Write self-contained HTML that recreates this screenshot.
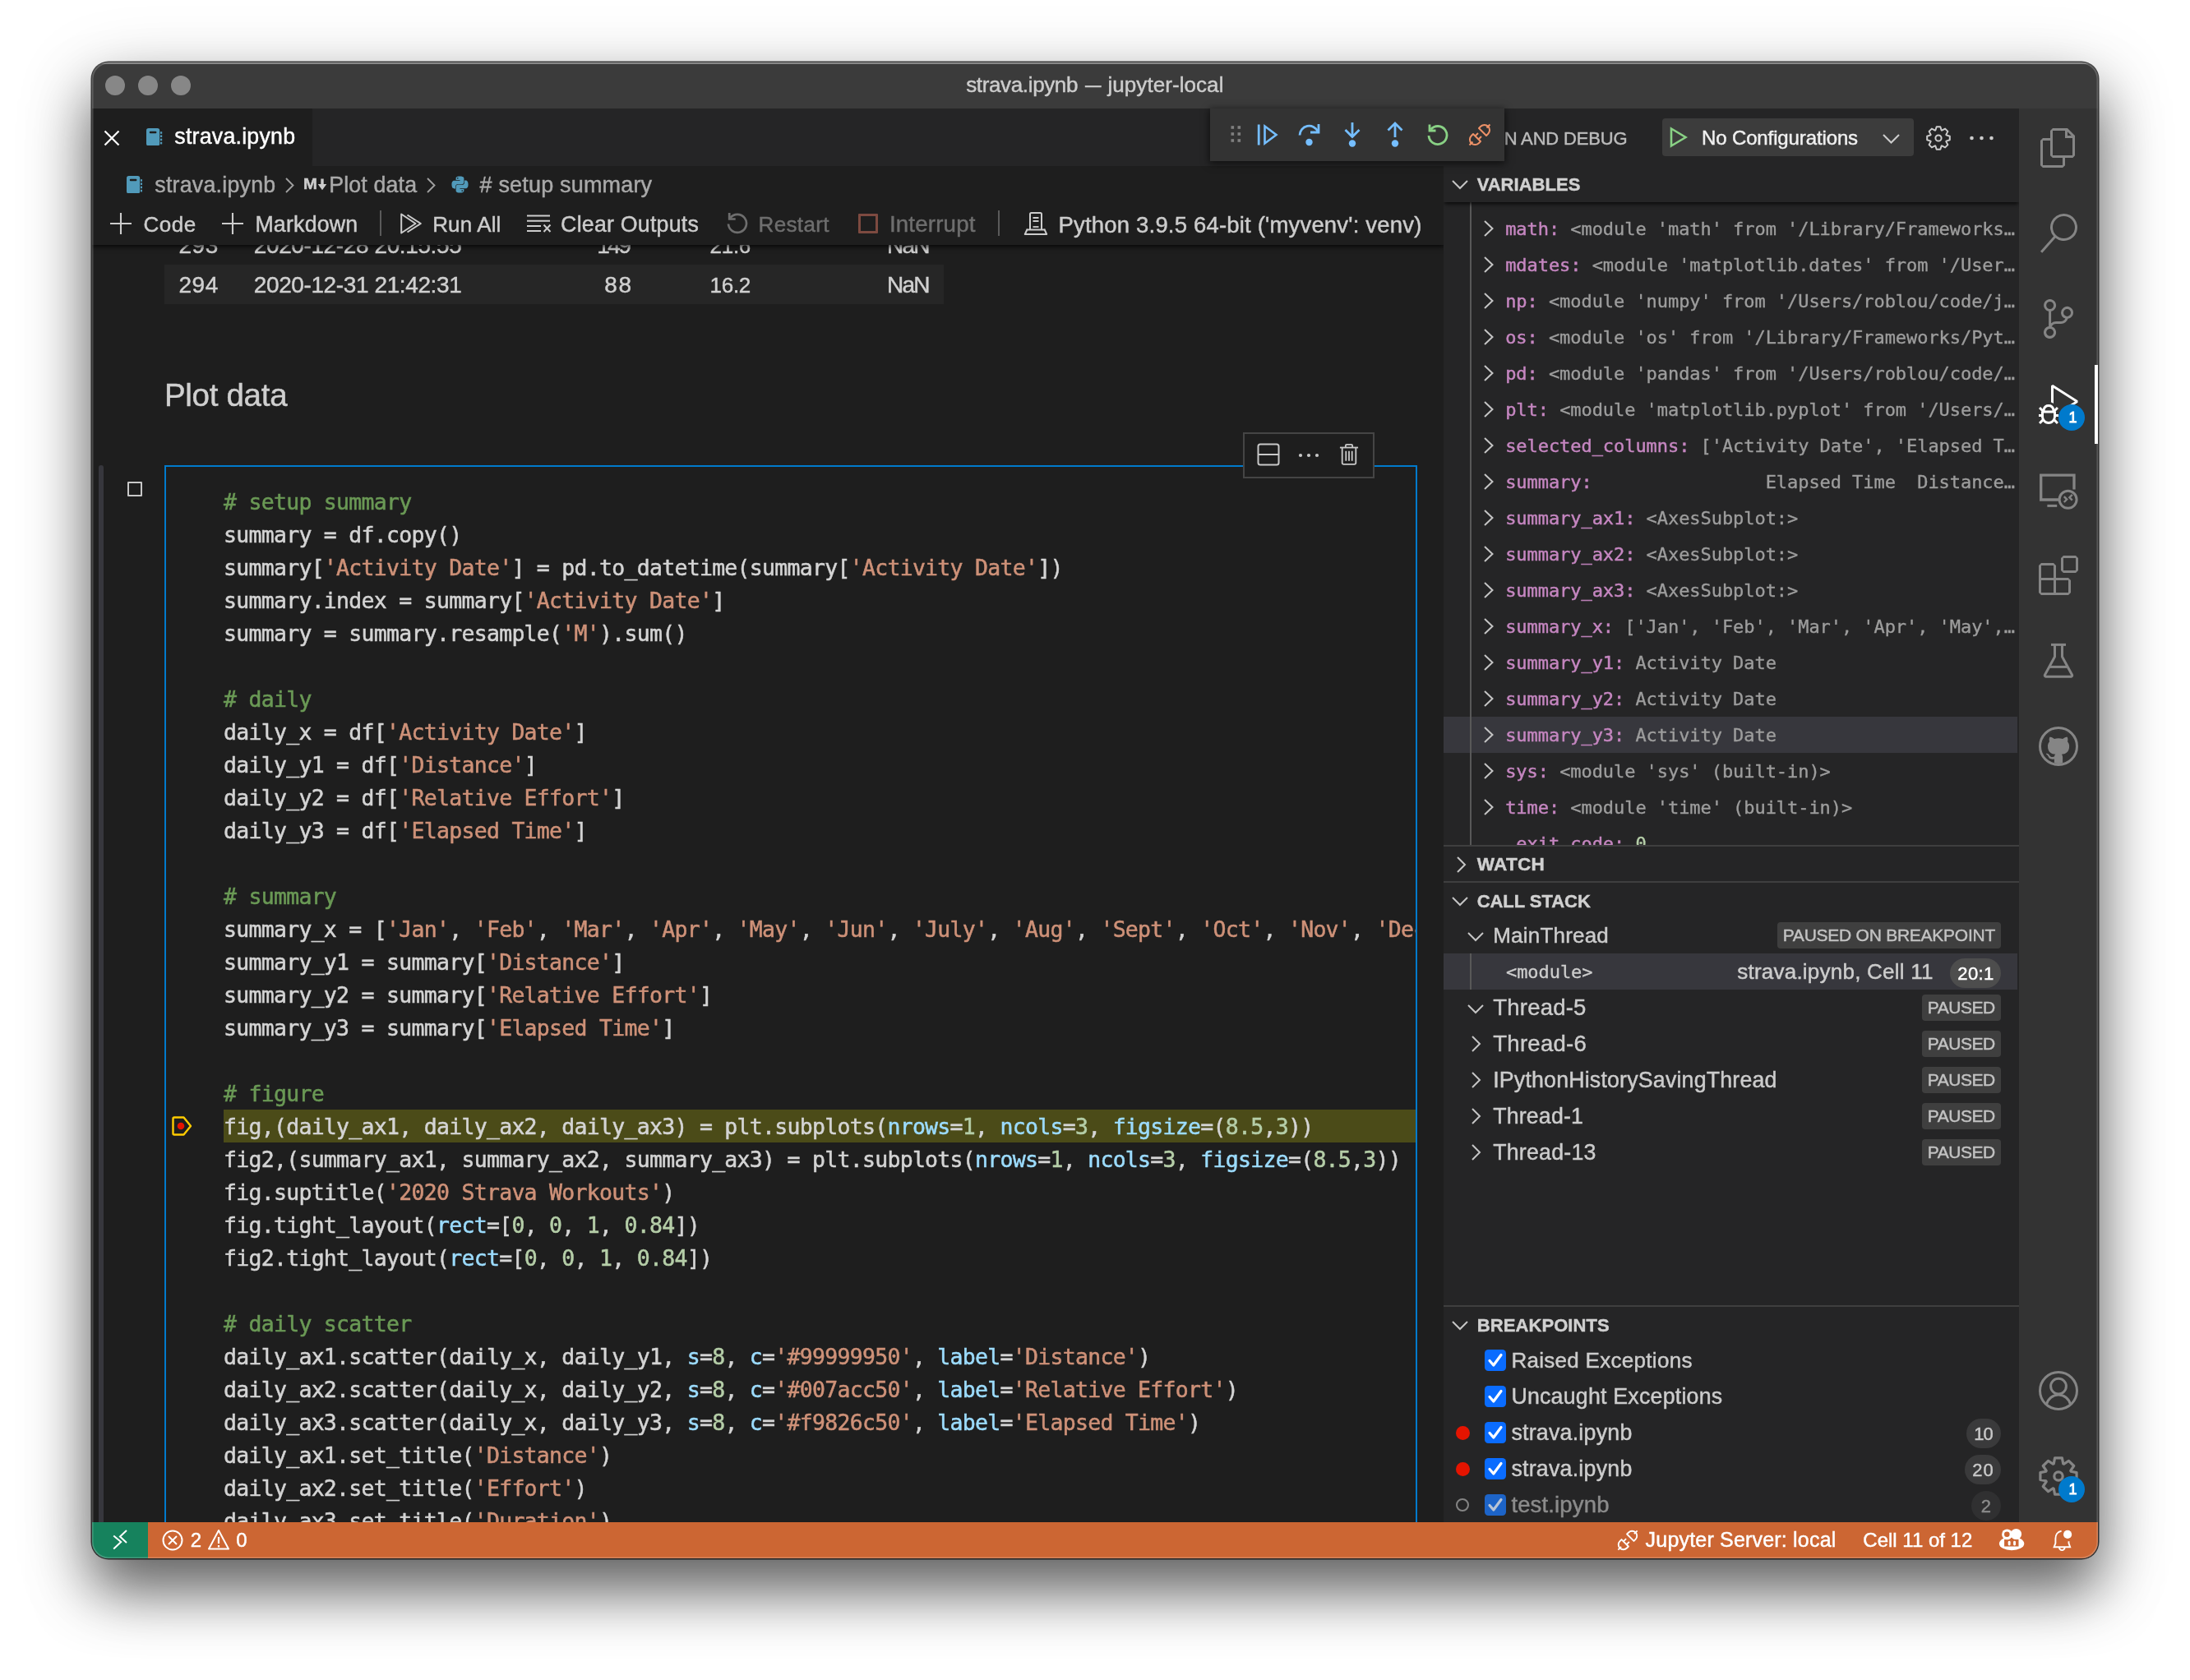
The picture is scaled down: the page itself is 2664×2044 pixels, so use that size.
<!DOCTYPE html>
<html lang="en"><head><meta charset="utf-8"><title>strava.ipynb — jupyter-local</title>
<style>
html,body{margin:0;padding:0;background:#fff;}
body{width:2664px;height:2044px;position:relative;overflow:hidden;font-family:"Liberation Sans",sans-serif;}
#win{position:absolute;left:112px;top:76px;width:2440px;height:1820px;border-radius:20px;overflow:hidden;background:#1e1e1e;}
#shadow{position:absolute;left:112px;top:76px;width:2440px;height:1820px;border-radius:20px;box-shadow:0 0 0 1.5px rgba(0,0,0,.72),0 40px 68px rgba(0,0,0,.5),0 25px 90px rgba(0,0,0,.25);}
#edge{position:absolute;left:112px;top:76px;width:2440px;height:1820px;border-radius:20px;box-shadow:inset 0 0 0 1.5px rgba(255,255,255,.2);pointer-events:none;}
#in{position:absolute;left:-112px;top:-76px;width:2664px;height:2044px;will-change:transform;}
#in div,#in span,#in svg{position:absolute;}
#in span{white-space:pre;-webkit-text-stroke:0.45px;}
#in .clip{overflow:hidden;}
#in .clip>div,#in .clip>span,#in .clip>svg{position:absolute;}
.code{font-family:'DejaVu Sans Mono','Liberation Mono',monospace;font-size:26.5px;letter-spacing:-0.72px;line-height:40px;color:#d4d4d4;white-space:pre;height:40px;-webkit-text-stroke:0.5px;}
.code i{font-style:normal;position:static!important;}
#in .code span{position:static;}
.c{color:#6a9955}.s{color:#ce9178}.n{color:#b5cea8}.k{color:#9cdcfe}
.v{font-family:'DejaVu Sans Mono','Liberation Mono',monospace;font-size:22px;letter-spacing:-0.06px;line-height:44px;height:44px;color:#9d9d9d;white-space:pre;-webkit-text-stroke:0.35px;}
#in .v span{position:static;color:#c586c0;}
</style></head><body>
<div id="shadow"></div>
<div id="win"><div id="in">
<div style="left:112px;top:76px;width:2440px;height:56px;background:#3b3b3b;"></div>
<div style="left:112px;top:76px;width:2440px;height:2px;background:rgba(255,255,255,.3);"></div>
<div style="left:128px;top:92px;width:24px;height:24px;background:#878787;border-radius:50%;"></div>
<div style="left:168px;top:92px;width:24px;height:24px;background:#878787;border-radius:50%;"></div>
<div style="left:208px;top:92px;width:24px;height:24px;background:#878787;border-radius:50%;"></div>
<span style="left:1175.21px;top:83.89px;font-size:26px;line-height:39px;color:#cccccc;letter-spacing:-0.36px;">strava.ipynb</span>
<span style="left:1319.51px;top:83.89px;font-size:26px;line-height:39px;color:#cccccc;transform:scaleX(0.75);transform-origin:0 50%;">—</span>
<span style="left:1347.41px;top:83.89px;font-size:26px;line-height:39px;color:#cccccc;letter-spacing:0.07px;">jupyter-local</span>
<div style="left:112px;top:132px;width:1644px;height:1720px;background:#1e1e1e;"></div>
<div style="left:1756px;top:132px;width:700px;height:1720px;background:#252526;"></div>
<div style="left:2456px;top:132px;width:96px;height:1720px;background:#333333;"></div>
<div style="left:112px;top:1852px;width:2440px;height:44px;background:#cc6633;"></div>
<div style="left:112px;top:1852px;width:68px;height:44px;background:#16825d;"></div>
<div class="clip" style="left:112px;top:298px;width:1644px;height:1554px;">
<div style="left:88px;top:24px;width:948px;height:48px;background:#262626;"></div>
<span style="left:105.48px;top:-19.76px;font-size:28px;line-height:42px;color:#d0d0d0;letter-spacing:0.56px;">293</span>
<span style="left:196.78px;top:-19.76px;font-size:28px;line-height:42px;color:#d0d0d0;letter-spacing:-0.39px;">2020-12-28 20:15:55</span>
<span style="left:614.18px;top:-19.76px;font-size:28px;line-height:42px;color:#d0d0d0;letter-spacing:-2.39px;">149</span>
<span style="left:751.61px;top:-17.57px;font-size:26px;line-height:39px;color:#d0d0d0;letter-spacing:-0.31px;">21.6</span>
<span style="left:967.08px;top:-19.76px;font-size:28px;line-height:42px;color:#d0d0d0;letter-spacing:-1.84px;">NaN</span>
<span style="left:105.48px;top:28.24px;font-size:28px;line-height:42px;color:#d0d0d0;letter-spacing:0.56px;">294</span>
<span style="left:196.78px;top:28.24px;font-size:28px;line-height:42px;color:#d0d0d0;letter-spacing:-0.39px;">2020-12-31 21:42:31</span>
<span style="left:623.28px;top:28.24px;font-size:28px;line-height:42px;color:#d0d0d0;letter-spacing:1.68px;">88</span>
<span style="left:751.61px;top:30.43px;font-size:26px;line-height:39px;color:#d0d0d0;letter-spacing:-0.31px;">16.2</span>
<span style="left:967.08px;top:28.24px;font-size:28px;line-height:42px;color:#d0d0d0;letter-spacing:-1.84px;">NaN</span>
<span style="left:87.92px;top:153.96px;font-size:38.5px;line-height:58px;color:#cfcfcf;letter-spacing:-0.29px;">Plot data</span>
<div style="left:8px;top:268px;width:6px;height:1300px;background:#37373d;border-radius:3px 3px 0 0;"></div>
<div style="left:88px;top:268px;width:1524px;height:1300px;background:transparent;border:2px solid #007acc;box-sizing:border-box;"></div>
<div style="left:43px;top:287.5px;width:18px;height:18px;background:transparent;border:2px solid #c8c8c8;box-sizing:border-box;border-radius:1px;"></div>
<div style="left:160px;top:1052px;width:1450px;height:40px;background:#4b4b18;"></div>
<svg style="left:96px;top:1058px" width="28" height="28" viewBox="0 0 28 28"><path d="M4 3.5h11.5l8.5 10.5-8.5 10.5H4a1.5 1.5 0 0 1-1.500-1.500v-18A1.500 1.500 0 0 1 4 3.500z" fill="none" stroke="#ffcc00" stroke-width="2.4" stroke-linejoin="round"/><circle cx="12" cy="14" r="4.300" fill="#e51400"/></svg>
<div class="clip" style="left:90px;top:270px;width:1520px;height:1300px;">
<div class="code" style="left:70px;top:23px;"><i class="c"># setup summary</i></div>
<div class="code" style="left:70px;top:63px;">summary = df.copy()</div>
<div class="code" style="left:70px;top:103px;">summary[<i class="s">&#x27;Activity Date&#x27;</i>] = pd.to_datetime(summary[<i class="s">&#x27;Activity Date&#x27;</i>])</div>
<div class="code" style="left:70px;top:143px;">summary.index = summary[<i class="s">&#x27;Activity Date&#x27;</i>]</div>
<div class="code" style="left:70px;top:183px;">summary = summary.resample(<i class="s">&#x27;M&#x27;</i>).sum()</div>
<div class="code" style="left:70px;top:263px;"><i class="c"># daily</i></div>
<div class="code" style="left:70px;top:303px;">daily_x = df[<i class="s">&#x27;Activity Date&#x27;</i>]</div>
<div class="code" style="left:70px;top:343px;">daily_y1 = df[<i class="s">&#x27;Distance&#x27;</i>]</div>
<div class="code" style="left:70px;top:383px;">daily_y2 = df[<i class="s">&#x27;Relative Effort&#x27;</i>]</div>
<div class="code" style="left:70px;top:423px;">daily_y3 = df[<i class="s">&#x27;Elapsed Time&#x27;</i>]</div>
<div class="code" style="left:70px;top:503px;"><i class="c"># summary</i></div>
<div class="code" style="left:70px;top:543px;">summary_x = [<i class="s">&#x27;Jan&#x27;</i>, <i class="s">&#x27;Feb&#x27;</i>, <i class="s">&#x27;Mar&#x27;</i>, <i class="s">&#x27;Apr&#x27;</i>, <i class="s">&#x27;May&#x27;</i>, <i class="s">&#x27;Jun&#x27;</i>, <i class="s">&#x27;July&#x27;</i>, <i class="s">&#x27;Aug&#x27;</i>, <i class="s">&#x27;Sept&#x27;</i>, <i class="s">&#x27;Oct&#x27;</i>, <i class="s">&#x27;Nov&#x27;</i>, <i class="s">&#x27;Dec&#x27;</i>]</div>
<div class="code" style="left:70px;top:583px;">summary_y1 = summary[<i class="s">&#x27;Distance&#x27;</i>]</div>
<div class="code" style="left:70px;top:623px;">summary_y2 = summary[<i class="s">&#x27;Relative Effort&#x27;</i>]</div>
<div class="code" style="left:70px;top:663px;">summary_y3 = summary[<i class="s">&#x27;Elapsed Time&#x27;</i>]</div>
<div class="code" style="left:70px;top:743px;"><i class="c"># figure</i></div>
<div class="code" style="left:70px;top:783px;">fig,(daily_ax1, daily_ax2, daily_ax3) = plt.subplots(<i class="k">nrows</i>=<i class="n">1</i>, <i class="k">ncols</i>=<i class="n">3</i>, <i class="k">figsize</i>=(<i class="n">8.5</i>,<i class="n">3</i>))</div>
<div class="code" style="left:70px;top:823px;">fig2,(summary_ax1, summary_ax2, summary_ax3) = plt.subplots(<i class="k">nrows</i>=<i class="n">1</i>, <i class="k">ncols</i>=<i class="n">3</i>, <i class="k">figsize</i>=(<i class="n">8.5</i>,<i class="n">3</i>))</div>
<div class="code" style="left:70px;top:863px;">fig.suptitle(<i class="s">&#x27;2020 Strava Workouts&#x27;</i>)</div>
<div class="code" style="left:70px;top:903px;">fig.tight_layout(<i class="k">rect</i>=[<i class="n">0</i>, <i class="n">0</i>, <i class="n">1</i>, <i class="n">0.84</i>])</div>
<div class="code" style="left:70px;top:943px;">fig2.tight_layout(<i class="k">rect</i>=[<i class="n">0</i>, <i class="n">0</i>, <i class="n">1</i>, <i class="n">0.84</i>])</div>
<div class="code" style="left:70px;top:1023px;"><i class="c"># daily scatter</i></div>
<div class="code" style="left:70px;top:1063px;">daily_ax1.scatter(daily_x, daily_y1, <i class="k">s</i>=<i class="n">8</i>, <i class="k">c</i>=<i class="s">&#x27;#99999950&#x27;</i>, <i class="k">label</i>=<i class="s">&#x27;Distance&#x27;</i>)</div>
<div class="code" style="left:70px;top:1103px;">daily_ax2.scatter(daily_x, daily_y2, <i class="k">s</i>=<i class="n">8</i>, <i class="k">c</i>=<i class="s">&#x27;#007acc50&#x27;</i>, <i class="k">label</i>=<i class="s">&#x27;Relative Effort&#x27;</i>)</div>
<div class="code" style="left:70px;top:1143px;">daily_ax3.scatter(daily_x, daily_y3, <i class="k">s</i>=<i class="n">8</i>, <i class="k">c</i>=<i class="s">&#x27;#f9826c50&#x27;</i>, <i class="k">label</i>=<i class="s">&#x27;Elapsed Time&#x27;</i>)</div>
<div class="code" style="left:70px;top:1183px;">daily_ax1.set_title(<i class="s">&#x27;Distance&#x27;</i>)</div>
<div class="code" style="left:70px;top:1223px;">daily_ax2.set_title(<i class="s">&#x27;Effort&#x27;</i>)</div>
<div class="code" style="left:70px;top:1263px;">daily_ax3.set_title(<i class="s">&#x27;Duration&#x27;</i>)</div>
</div>
</div>
<div style="left:1512px;top:526px;width:160px;height:56px;background:#1e1e1e;border:2px solid #454545;box-sizing:border-box;"></div>
<div class="clip" style="left:112px;top:246px;width:1644px;height:80px;">
<div style="left:0px;top:0px;width:1644px;height:52px;background:#1e1e1e;box-shadow:0 1px 6px 1px rgba(0,0,0,.8);"></div>
</div>
<div style="left:112px;top:202px;width:1644px;height:46px;background:#1e1e1e;"></div>
<div style="left:112px;top:132px;width:1644px;height:70px;background:#252526;"></div>
<div style="left:112px;top:132px;width:268px;height:70px;background:#1e1e1e;"></div>
<svg style="left:124px;top:156px;" width="24" height="24" viewBox="0 0 24 24"><path d="M3.500 3.500 L20.500 20.500 M20.500 3.500 L3.500 20.500" stroke="#ffffff" stroke-width="2.200" fill="none"/></svg>
<svg style="left:178px;top:155.7px;" width="19.5" height="21.5" viewBox="0 0 19.5 21.5"><rect x="0" y="0" width="16.200" height="21.500" rx="2.800" fill="#519aba"/><rect x="3.800" y="3.800" width="8.600" height="2.400" rx="1" fill="#1e1e1e"/><rect x="17" y="4.2" width="2.200" height="2.600" fill="#519aba"/><rect x="17" y="8.4" width="2.200" height="2.600" fill="#519aba"/><rect x="17" y="12.6" width="2.200" height="2.600" fill="#519aba"/><rect x="17" y="16.8" width="2.200" height="2.600" fill="#519aba"/></svg>
<span style="left:212.3px;top:146.46px;font-size:26.75px;line-height:40px;color:#ffffff;letter-spacing:0.23px;">strava.ipynb</span>
<svg style="left:153.8px;top:213.7px;" width="19.5" height="21.5" viewBox="0 0 19.5 21.5"><rect x="0" y="0" width="16.200" height="21.500" rx="2.800" fill="#519aba"/><rect x="3.800" y="3.800" width="8.600" height="2.400" rx="1" fill="#1e1e1e"/><rect x="17" y="4.2" width="2.200" height="2.600" fill="#519aba"/><rect x="17" y="8.4" width="2.200" height="2.600" fill="#519aba"/><rect x="17" y="12.6" width="2.200" height="2.600" fill="#519aba"/><rect x="17" y="16.8" width="2.200" height="2.600" fill="#519aba"/></svg>
<span style="left:188.3px;top:204.96px;font-size:26.75px;line-height:40px;color:#a9a9a9;letter-spacing:0.24px;">strava.ipynb</span>
<svg style="left:345.75px;top:215px;" width="12.5" height="21" viewBox="0 0 12.5 21"><path d="M2 2 L10.5 10.5 L2 19" fill="none" stroke="#a0a0a0" stroke-width="1.9"/></svg>
<span style="left:368.63px;top:210.86px;font-size:18px;line-height:27px;color:#cccccc;font-weight:bold;transform:scaleX(1.13);transform-origin:0 50%;">M</span>
<svg style="left:385.7px;top:217px;" width="12" height="15" viewBox="0 0 12 15"><path d="M4.300 .500h3.400v6.500h3.600L6 14.200L.700 7h3.600z" fill="#cccccc"/></svg>
<span style="left:400.2px;top:204.96px;font-size:26.75px;line-height:40px;color:#a9a9a9;letter-spacing:0.16px;">Plot data</span>
<svg style="left:517.75px;top:215px;" width="12.5" height="21" viewBox="0 0 12.5 21"><path d="M2 2 L10.5 10.5 L2 19" fill="none" stroke="#a0a0a0" stroke-width="1.9"/></svg>
<svg style="left:547.6px;top:212.6px;" width="23" height="23" viewBox="0 0 32 32"><path fill="#519aba" d="M15.900 2c-7.100 0-6.700 3.100-6.700 3.100v3.200h6.800v1H6.500S2 8.800 2 15.900s4 6.900 4 6.900h2.400v-3.300s-.100-4 3.900-4h6.700s3.800.100 3.800-3.600V5.700S23.400 2 15.900 2zm-3.700 2.100c.700 0 1.200.500 1.200 1.200s-.500 1.200-1.200 1.200-1.200-.500-1.200-1.200.500-1.200 1.200-1.200z"/><path fill="#519aba" d="M16.100 30c7.100 0 6.700-3.100 6.700-3.100v-3.200H16v-1h9.500s4.500.500 4.500-6.600-4-6.900-4-6.900h-2.400v3.300s.100 4-3.900 4H13s-3.800-.100-3.800 3.600v6.200S8.600 30 16.100 30zm3.700-2.100c-.700 0-1.200-.500-1.200-1.200s.500-1.200 1.200-1.200 1.200.500 1.200 1.200-.500 1.200-1.200 1.200z"/></svg>
<span style="left:583.6px;top:204.87px;font-size:27px;line-height:40px;color:#a9a9a9;letter-spacing:0.17px;"># setup summary</span>
<svg style="left:133px;top:257.5px;" width="28" height="28" viewBox="0 0 28 28"><path d="M14 1v26 M1 14h26" stroke="#cccccc" stroke-width="2.100" fill="none"/></svg>
<span style="left:174.41px;top:254.22px;font-size:26px;line-height:39px;color:#cccccc;letter-spacing:0.54px;">Code</span>
<svg style="left:269px;top:257.5px;" width="28" height="28" viewBox="0 0 28 28"><path d="M14 1v26 M1 14h26" stroke="#cccccc" stroke-width="2.100" fill="none"/></svg>
<span style="left:310.4px;top:253.46px;font-size:26.75px;line-height:40px;color:#cccccc;letter-spacing:0.2px;">Markdown</span>
<div style="left:462px;top:256px;width:2px;height:31px;background:#5a5a5a;"></div>
<svg style="left:486px;top:258px;" width="28" height="28" viewBox="0 0 28 28"><path d="M2.200 2.500 L19.500 14 L2.200 25.500 Z" fill="none" stroke="#cccccc" stroke-width="2" stroke-linejoin="round"/><path d="M9.500 3.500 L25.800 14 L9.500 24.500" fill="none" stroke="#cccccc" stroke-width="2" stroke-linejoin="round"/></svg>
<span style="left:526.21px;top:254.22px;font-size:26px;line-height:39px;color:#cccccc;letter-spacing:0.13px;">Run All</span>
<svg style="left:640px;top:258px;" width="32" height="28" viewBox="0 0 32 28"><path d="M1 4.500h28 M1 10.700h28 M1 16.900h17 M1 23.100h17" stroke="#cccccc" stroke-width="2" fill="none"/><path d="M21.500 15.500 L29.500 24 M29.500 15.500 L21.500 24" stroke="#cccccc" stroke-width="2" fill="none"/></svg>
<span style="left:682.1px;top:253.46px;font-size:26.75px;line-height:40px;color:#cccccc;letter-spacing:0.22px;">Clear Outputs</span>
<svg style="left:883px;top:257px;" width="28" height="28" viewBox="0 0 28 28"><path d="M5.200 8.200 A11 11 0 1 1 3 15.500" fill="none" stroke="#6e6e6e" stroke-width="2.700"/><path d="M4.200 2v7.500h7.500" fill="none" stroke="#6e6e6e" stroke-width="2.700"/></svg>
<span style="left:922.61px;top:254.22px;font-size:26px;line-height:39px;color:#6e6e6e;letter-spacing:0.33px;">Restart</span>
<div style="left:1044px;top:260px;width:24px;height:24px;background:transparent;border:3px solid #7d4a40;box-sizing:border-box;border-radius:1px;"></div>
<span style="left:1081.88px;top:252.11px;font-size:27.75px;line-height:42px;color:#6e6e6e;letter-spacing:0.15px;">Interrupt</span>
<div style="left:1214px;top:256px;width:2px;height:31px;background:#5a5a5a;"></div>
<svg style="left:1245px;top:257px;" width="30" height="30" viewBox="0 0 30 30"><path d="M8 22.500V3.500a1.500 1.500 0 0 1 1.500-1.500h11a1.500 1.500 0 0 1 1.500 1.500v19 M4.800 22.500h20.400" fill="none" stroke="#cccccc" stroke-width="2"/><path d="M11.500 8h7 M11.500 12h7" stroke="#cccccc" stroke-width="1.800"/><path d="M4.800 21.500 L1.800 28 H28.200 L25.200 21.500" fill="none" stroke="#cccccc" stroke-width="2" stroke-linejoin="round"/><path d="M11.500 19h7" stroke="#cccccc" stroke-width="1.800"/></svg>
<span style="left:1287.59px;top:252.7px;font-size:27.5px;line-height:41px;color:#cccccc;letter-spacing:0.18px;">Python 3.9.5 64-bit (&#x27;myvenv&#x27;: venv)</span>
<span style="left:1829.67px;top:151.69px;font-size:22px;line-height:33px;color:#bbbbbb;letter-spacing:-0.16px;">N AND DEBUG</span>
<div style="left:2022px;top:144px;width:306px;height:46px;background:#3c3c3c;border-radius:4px;"></div>
<svg style="left:2030px;top:154px;" width="24" height="26" viewBox="0 0 24 26"><path d="M3 2.500 L20.500 13 L3 23.500 Z" fill="none" stroke="#89d185" stroke-width="2.600" stroke-linejoin="miter"/></svg>
<span style="left:2069.94px;top:150.41px;font-size:24px;line-height:36px;color:#f0f0f0;letter-spacing:-0.12px;">No Configurations</span>
<svg style="left:2288.5px;top:161.75px;" width="23" height="13.5" viewBox="0 0 23 13.5"><path d="M2 2 L11.5 11.5 L21 2" fill="none" stroke="#cccccc" stroke-width="2.1"/></svg>
<svg style="left:2340px;top:150px;" width="36" height="36" viewBox="0 0 36 36"><path d="M14.33 8.48 L15.70 4.19 L20.30 4.19 L21.67 8.48 L22.14 8.68 L26.14 6.61 L29.39 9.86 L27.32 13.86 L27.52 14.33 L31.81 15.70 L31.81 20.30 L27.52 21.67 L27.32 22.14 L29.39 26.14 L26.14 29.39 L22.14 27.32 L21.67 27.52 L20.30 31.81 L15.70 31.81 L14.33 27.52 L13.86 27.32 L9.86 29.39 L6.61 26.14 L8.68 22.14 L8.48 21.67 L4.19 20.30 L4.19 15.70 L8.48 14.33 L8.68 13.86 L6.61 9.86 L9.86 6.61 L13.86 8.68 Z" fill="none" stroke="#cccccc" stroke-width="2" stroke-linejoin="round"/><circle cx="18" cy="18" r="3.6" fill="none" stroke="#cccccc" stroke-width="2"/></svg>
<svg style="left:2392px;top:160px;" width="40" height="16" viewBox="0 0 40 16"><circle cx="6.5" cy="8" r="2.300" fill="#cccccc"/><circle cx="18.5" cy="8" r="2.300" fill="#cccccc"/><circle cx="30.5" cy="8" r="2.300" fill="#cccccc"/></svg>
<div class="clip" style="left:1756px;top:246px;width:700px;height:782px;">
<div style="left:0px;top:626px;width:698px;height:44px;background:#37373d;"></div>
<div style="left:32px;top:0px;width:2px;height:782px;background:#585858;"></div>
<svg style="left:48px;top:21px;" width="14" height="22" viewBox="0 0 14 22"><path d="M2 2 L11.500 11 L2 20" fill="none" stroke="#c5c5c5" stroke-width="2"/></svg>
<div class="v" style="left:75.20000000000005px;top:11px;"><span>math: </span>&lt;module &#x27;math&#x27; from &#x27;/Library/Frameworks…</div>
<svg style="left:48px;top:65px;" width="14" height="22" viewBox="0 0 14 22"><path d="M2 2 L11.500 11 L2 20" fill="none" stroke="#c5c5c5" stroke-width="2"/></svg>
<div class="v" style="left:75.20000000000005px;top:55px;"><span>mdates: </span>&lt;module &#x27;matplotlib.dates&#x27; from &#x27;/User…</div>
<svg style="left:48px;top:109px;" width="14" height="22" viewBox="0 0 14 22"><path d="M2 2 L11.500 11 L2 20" fill="none" stroke="#c5c5c5" stroke-width="2"/></svg>
<div class="v" style="left:75.20000000000005px;top:99px;"><span>np: </span>&lt;module &#x27;numpy&#x27; from &#x27;/Users/roblou/code/j…</div>
<svg style="left:48px;top:153px;" width="14" height="22" viewBox="0 0 14 22"><path d="M2 2 L11.500 11 L2 20" fill="none" stroke="#c5c5c5" stroke-width="2"/></svg>
<div class="v" style="left:75.20000000000005px;top:143px;"><span>os: </span>&lt;module &#x27;os&#x27; from &#x27;/Library/Frameworks/Pyt…</div>
<svg style="left:48px;top:197px;" width="14" height="22" viewBox="0 0 14 22"><path d="M2 2 L11.500 11 L2 20" fill="none" stroke="#c5c5c5" stroke-width="2"/></svg>
<div class="v" style="left:75.20000000000005px;top:187px;"><span>pd: </span>&lt;module &#x27;pandas&#x27; from &#x27;/Users/roblou/code/…</div>
<svg style="left:48px;top:241px;" width="14" height="22" viewBox="0 0 14 22"><path d="M2 2 L11.500 11 L2 20" fill="none" stroke="#c5c5c5" stroke-width="2"/></svg>
<div class="v" style="left:75.20000000000005px;top:231px;"><span>plt: </span>&lt;module &#x27;matplotlib.pyplot&#x27; from &#x27;/Users/…</div>
<svg style="left:48px;top:285px;" width="14" height="22" viewBox="0 0 14 22"><path d="M2 2 L11.500 11 L2 20" fill="none" stroke="#c5c5c5" stroke-width="2"/></svg>
<div class="v" style="left:75.20000000000005px;top:275px;"><span>selected_columns: </span>[&#x27;Activity Date&#x27;, &#x27;Elapsed T…</div>
<svg style="left:48px;top:329px;" width="14" height="22" viewBox="0 0 14 22"><path d="M2 2 L11.500 11 L2 20" fill="none" stroke="#c5c5c5" stroke-width="2"/></svg>
<div class="v" style="left:75.20000000000005px;top:319px;"><span>summary: </span>               Elapsed Time  Distance…</div>
<svg style="left:48px;top:373px;" width="14" height="22" viewBox="0 0 14 22"><path d="M2 2 L11.500 11 L2 20" fill="none" stroke="#c5c5c5" stroke-width="2"/></svg>
<div class="v" style="left:75.20000000000005px;top:363px;"><span>summary_ax1: </span>&lt;AxesSubplot:&gt;</div>
<svg style="left:48px;top:417px;" width="14" height="22" viewBox="0 0 14 22"><path d="M2 2 L11.500 11 L2 20" fill="none" stroke="#c5c5c5" stroke-width="2"/></svg>
<div class="v" style="left:75.20000000000005px;top:407px;"><span>summary_ax2: </span>&lt;AxesSubplot:&gt;</div>
<svg style="left:48px;top:461px;" width="14" height="22" viewBox="0 0 14 22"><path d="M2 2 L11.500 11 L2 20" fill="none" stroke="#c5c5c5" stroke-width="2"/></svg>
<div class="v" style="left:75.20000000000005px;top:451px;"><span>summary_ax3: </span>&lt;AxesSubplot:&gt;</div>
<svg style="left:48px;top:505px;" width="14" height="22" viewBox="0 0 14 22"><path d="M2 2 L11.500 11 L2 20" fill="none" stroke="#c5c5c5" stroke-width="2"/></svg>
<div class="v" style="left:75.20000000000005px;top:495px;"><span>summary_x: </span>[&#x27;Jan&#x27;, &#x27;Feb&#x27;, &#x27;Mar&#x27;, &#x27;Apr&#x27;, &#x27;May&#x27;,…</div>
<svg style="left:48px;top:549px;" width="14" height="22" viewBox="0 0 14 22"><path d="M2 2 L11.500 11 L2 20" fill="none" stroke="#c5c5c5" stroke-width="2"/></svg>
<div class="v" style="left:75.20000000000005px;top:539px;"><span>summary_y1: </span>Activity Date</div>
<svg style="left:48px;top:593px;" width="14" height="22" viewBox="0 0 14 22"><path d="M2 2 L11.500 11 L2 20" fill="none" stroke="#c5c5c5" stroke-width="2"/></svg>
<div class="v" style="left:75.20000000000005px;top:583px;"><span>summary_y2: </span>Activity Date</div>
<svg style="left:48px;top:637px;" width="14" height="22" viewBox="0 0 14 22"><path d="M2 2 L11.500 11 L2 20" fill="none" stroke="#c5c5c5" stroke-width="2"/></svg>
<div class="v" style="left:75.20000000000005px;top:627px;"><span>summary_y3: </span>Activity Date</div>
<svg style="left:48px;top:681px;" width="14" height="22" viewBox="0 0 14 22"><path d="M2 2 L11.500 11 L2 20" fill="none" stroke="#c5c5c5" stroke-width="2"/></svg>
<div class="v" style="left:75.20000000000005px;top:671px;"><span>sys: </span>&lt;module &#x27;sys&#x27; (built-in)&gt;</div>
<svg style="left:48px;top:725px;" width="14" height="22" viewBox="0 0 14 22"><path d="M2 2 L11.500 11 L2 20" fill="none" stroke="#c5c5c5" stroke-width="2"/></svg>
<div class="v" style="left:75.20000000000005px;top:715px;"><span>time: </span>&lt;module &#x27;time&#x27; (built-in)&gt;</div>
<div class="v" style="left:75.20000000000005px;top:759px;"><span>_exit_code: </span><b style="font-weight:normal;color:#b5cea8">0</b></div>
</div>
<div class="clip" style="left:1756px;top:202px;width:700px;height:60px;">
<div style="left:0px;top:0px;width:700px;height:44px;background:#252526;box-shadow:0 3px 5px -1px rgba(0,0,0,.8);"></div>
</div>
<svg style="left:1765px;top:218px;" width="22" height="13" viewBox="0 0 22 13"><path d="M2 2 L11.0 11 L20 2" fill="none" stroke="#c5c5c5" stroke-width="2"/></svg>
<span style="left:1796.67px;top:207.69px;font-size:22px;line-height:33px;color:#d0d0d0;font-weight:bold;letter-spacing:0.02px;">VARIABLES</span>
<div style="left:1756px;top:1028px;width:700px;height:2px;background:#3f3f3f;"></div>
<svg style="left:1770.5px;top:1040.5px;" width="13" height="22" viewBox="0 0 13 22"><path d="M2 2 L11 11.0 L2 20" fill="none" stroke="#c5c5c5" stroke-width="2"/></svg>
<span style="left:1796.66px;top:1035.01px;font-size:22.5px;line-height:34px;color:#d0d0d0;font-weight:bold;letter-spacing:0.34px;">WATCH</span>
<div style="left:1756px;top:1072px;width:700px;height:2px;background:#3f3f3f;"></div>
<svg style="left:1765px;top:1090px;" width="22" height="13" viewBox="0 0 22 13"><path d="M2 2 L11.0 11 L20 2" fill="none" stroke="#c5c5c5" stroke-width="2"/></svg>
<span style="left:1796.67px;top:1079.69px;font-size:22px;line-height:33px;color:#d0d0d0;font-weight:bold;letter-spacing:-0.04px;">CALL STACK</span>
<div style="left:1756px;top:1588px;width:700px;height:2px;background:#3f3f3f;"></div>
<svg style="left:1765px;top:1606px;" width="22" height="13" viewBox="0 0 22 13"><path d="M2 2 L11.0 11 L20 2" fill="none" stroke="#c5c5c5" stroke-width="2"/></svg>
<span style="left:1796.67px;top:1595.69px;font-size:22px;line-height:33px;color:#d0d0d0;font-weight:bold;letter-spacing:0.1px;">BREAKPOINTS</span>
<div style="left:1756px;top:1160px;width:698px;height:44px;background:#37373d;"></div>
<div style="left:1788px;top:1160px;width:2px;height:44px;background:#585858;"></div>
<svg style="left:1783.5px;top:1132.5px;" width="22" height="13" viewBox="0 0 22 13"><path d="M2 2 L11.0 11 L20 2" fill="none" stroke="#c5c5c5" stroke-width="2"/></svg>
<span style="left:1816.21px;top:1118.72px;font-size:26px;line-height:39px;color:#cccccc;letter-spacing:0.21px;">MainThread</span>
<div style="left:2162px;top:1122.0px;width:272px;height:32px;background:#3f3f3f;border-radius:4px;"></div>
<span style="left:2168.68px;top:1122.18px;font-size:21px;line-height:32px;color:#c2c2c2;letter-spacing:-0.25px;">PAUSED ON BREAKPOINT</span>
<svg style="left:1783.5px;top:1220.5px;" width="22" height="13" viewBox="0 0 22 13"><path d="M2 2 L11.0 11 L20 2" fill="none" stroke="#c5c5c5" stroke-width="2"/></svg>
<span style="left:1816.19px;top:1205.2px;font-size:27.5px;line-height:41px;color:#cccccc;letter-spacing:0.23px;">Thread-5</span>
<div style="left:2338px;top:1210.0px;width:96px;height:32px;background:#3f3f3f;border-radius:4px;"></div>
<span style="left:2344.68px;top:1210.18px;font-size:21px;line-height:32px;color:#c2c2c2;letter-spacing:-0.44px;">PAUSED</span>
<svg style="left:1788.5px;top:1259px;" width="13" height="22" viewBox="0 0 13 22"><path d="M2 2 L11 11.0 L2 20" fill="none" stroke="#c5c5c5" stroke-width="2"/></svg>
<span style="left:1816.19px;top:1249.2px;font-size:27.5px;line-height:41px;color:#cccccc;letter-spacing:0.3px;">Thread-6</span>
<div style="left:2338px;top:1254.0px;width:96px;height:32px;background:#3f3f3f;border-radius:4px;"></div>
<span style="left:2344.68px;top:1254.18px;font-size:21px;line-height:32px;color:#c2c2c2;letter-spacing:-0.44px;">PAUSED</span>
<svg style="left:1788.5px;top:1303px;" width="13" height="22" viewBox="0 0 13 22"><path d="M2 2 L11 11.0 L2 20" fill="none" stroke="#c5c5c5" stroke-width="2"/></svg>
<span style="left:1816.2px;top:1293.96px;font-size:26.75px;line-height:40px;color:#cccccc;letter-spacing:0.19px;">IPythonHistorySavingThread</span>
<div style="left:2338px;top:1298.0px;width:96px;height:32px;background:#3f3f3f;border-radius:4px;"></div>
<span style="left:2344.68px;top:1298.18px;font-size:21px;line-height:32px;color:#c2c2c2;letter-spacing:-0.44px;">PAUSED</span>
<svg style="left:1788.5px;top:1347px;" width="13" height="22" viewBox="0 0 13 22"><path d="M2 2 L11 11.0 L2 20" fill="none" stroke="#c5c5c5" stroke-width="2"/></svg>
<span style="left:1816.2px;top:1337.96px;font-size:26.75px;line-height:40px;color:#cccccc;letter-spacing:0.17px;">Thread-1</span>
<div style="left:2338px;top:1342.0px;width:96px;height:32px;background:#3f3f3f;border-radius:4px;"></div>
<span style="left:2344.68px;top:1342.18px;font-size:21px;line-height:32px;color:#c2c2c2;letter-spacing:-0.44px;">PAUSED</span>
<svg style="left:1788.5px;top:1391px;" width="13" height="22" viewBox="0 0 13 22"><path d="M2 2 L11 11.0 L2 20" fill="none" stroke="#c5c5c5" stroke-width="2"/></svg>
<span style="left:1816.2px;top:1381.96px;font-size:26.75px;line-height:40px;color:#cccccc;letter-spacing:0.22px;">Thread-13</span>
<div style="left:2338px;top:1386.0px;width:96px;height:32px;background:#3f3f3f;border-radius:4px;"></div>
<span style="left:2344.68px;top:1386.18px;font-size:21px;line-height:32px;color:#c2c2c2;letter-spacing:-0.44px;">PAUSED</span>
<div class="v" style="left:1832px;top:1161px;color:#cccccc">&lt;module&gt;</div>
<span style="left:2113.21px;top:1162.72px;font-size:26px;line-height:39px;color:#cccccc;letter-spacing:0.23px;">strava.ipynb, Cell 11</span>
<div style="left:2372px;top:1166px;width:62px;height:36px;background:#4d4d4d;border-radius:18px;"></div>
<span style="left:2381.37px;top:1168.19px;font-size:22px;line-height:33px;color:#ffffff;letter-spacing:0.38px;">20:1</span>
<svg style="left:1806px;top:1642px;" width="26" height="26" viewBox="0 0 26 26"><rect x="0" y="0" width="26" height="26" rx="4.500" fill="#0a6cff"/><path d="M6 13.500 L10.800 19 L20 6.500" fill="none" stroke="#ffffff" stroke-width="3.200" stroke-linecap="round" stroke-linejoin="round"/></svg>
<span style="left:1838.41px;top:1635.72px;font-size:26px;line-height:39px;color:#cccccc;letter-spacing:0.29px;">Raised Exceptions</span>
<svg style="left:1806px;top:1686px;" width="26" height="26" viewBox="0 0 26 26"><rect x="0" y="0" width="26" height="26" rx="4.500" fill="#0a6cff"/><path d="M6 13.500 L10.800 19 L20 6.500" fill="none" stroke="#ffffff" stroke-width="3.200" stroke-linecap="round" stroke-linejoin="round"/></svg>
<span style="left:1838.4px;top:1678.96px;font-size:26.75px;line-height:40px;color:#cccccc;letter-spacing:0.22px;">Uncaught Exceptions</span>
<svg style="left:1806px;top:1730px;" width="26" height="26" viewBox="0 0 26 26"><rect x="0" y="0" width="26" height="26" rx="4.500" fill="#0a6cff"/><path d="M6 13.500 L10.800 19 L20 6.500" fill="none" stroke="#ffffff" stroke-width="3.200" stroke-linecap="round" stroke-linejoin="round"/></svg>
<span style="left:1838.4px;top:1722.96px;font-size:26.75px;line-height:40px;color:#cccccc;letter-spacing:0.24px;">strava.ipynb</span>
<div style="left:1770.5px;top:1734.5px;width:17px;height:17px;background:#e51400;border-radius:50%;"></div>
<div style="left:2392px;top:1726px;width:42px;height:36px;background:#3a3a3b;border-radius:18px;"></div>
<span style="left:2401.17px;top:1727.69px;font-size:22px;line-height:33px;color:#c8c8c8;letter-spacing:-0.82px;">10</span>
<svg style="left:1806px;top:1774px;" width="26" height="26" viewBox="0 0 26 26"><rect x="0" y="0" width="26" height="26" rx="4.500" fill="#0a6cff"/><path d="M6 13.500 L10.800 19 L20 6.500" fill="none" stroke="#ffffff" stroke-width="3.200" stroke-linecap="round" stroke-linejoin="round"/></svg>
<span style="left:1838.4px;top:1766.96px;font-size:26.75px;line-height:40px;color:#cccccc;letter-spacing:0.24px;">strava.ipynb</span>
<div style="left:1770.5px;top:1778.5px;width:17px;height:17px;background:#e51400;border-radius:50%;"></div>
<div style="left:2390px;top:1770px;width:44px;height:36px;background:#3a3a3b;border-radius:18px;"></div>
<span style="left:2399.17px;top:1771.69px;font-size:22px;line-height:33px;color:#c8c8c8;letter-spacing:1.18px;">20</span>
<svg style="left:1806px;top:1818px;" width="26" height="26" viewBox="0 0 26 26"><rect x="0" y="0" width="26" height="26" rx="4.500" fill="#1d64c8"/><path d="M6 13.500 L10.800 19 L20 6.500" fill="none" stroke="#b8c4d6" stroke-width="3.200" stroke-linecap="round" stroke-linejoin="round"/></svg>
<span style="left:1838.39px;top:1810.2px;font-size:27.5px;line-height:41px;color:#8b8b8b;letter-spacing:0.15px;">test.ipynb</span>
<div style="left:1771px;top:1823px;width:16px;height:16px;background:transparent;border:2.500px solid #848484;box-sizing:border-box;border-radius:50%;"></div>
<div style="left:2398px;top:1814px;width:36px;height:36px;background:#303031;border-radius:18px;"></div>
<span style="left:2409.67px;top:1815.69px;font-size:22px;line-height:33px;color:#8b8b8b;">2</span>
<svg style="left:132px;top:1860px;" width="28" height="28" viewBox="0 0 28 28"><path d="M6.200 8.500 L15.200 16 L6.200 24.500" fill="none" stroke="#ffffff" stroke-width="2"/><path d="M22 2 L14 9.500 L22 17" fill="none" stroke="#ffffff" stroke-width="2"/></svg>
<svg style="left:196px;top:1860px;" width="28" height="28" viewBox="0 0 28 28"><circle cx="14" cy="14" r="11.500" fill="none" stroke="#ffffff" stroke-width="2"/><path d="M9 9 L19 19 M19 9 L9 19" stroke="#ffffff" stroke-width="2"/></svg>
<span style="left:231.64px;top:1855.7px;font-size:24px;line-height:36px;color:#ffffff;">2</span>
<svg style="left:252px;top:1859px;" width="28" height="28" viewBox="0 0 28 28"><path d="M14 3 L26 25.500 H2 Z" fill="none" stroke="#ffffff" stroke-width="2" stroke-linejoin="round"/><path d="M14 11v8 M14 21v2.500" stroke="#ffffff" stroke-width="2.200"/></svg>
<span style="left:287.34px;top:1855.7px;font-size:24px;line-height:36px;color:#ffffff;">0</span>
<svg style="left:1966px;top:1860px;" width="28" height="28" viewBox="0 0 30 30"><g fill="none" stroke="#ffffff" stroke-width="2"><path d="M27.500 2.500 L23.500 6.500"/><path d="M14 7 L23 16 l2.200-2.200 a6.300 6.300 0 0 0 -9 -9 z" stroke-linejoin="round"/><path d="M2.500 27.500 L6.500 23.500"/><path d="M7 14 L16 23 l-2.200 2.200 a6.300 6.300 0 0 1 -9 -9 z" stroke-linejoin="round"/><path d="M9.500 16.500 l3.500 -3.500 M13.500 20.500 l3.500 -3.500"/></g></svg>
<span style="left:2001.62px;top:1854.36px;font-size:25px;line-height:38px;color:#ffffff;letter-spacing:0.19px;">Jupyter Server: local</span>
<span style="left:2266.34px;top:1855.7px;font-size:24px;line-height:36px;color:#ffffff;">Cell 11 of 12</span>
<svg style="left:2480px;top:156px;" width="48" height="48" viewBox="0 0 24 24"><path fill="#858585" d="M17.500 0h-9L7 1.500V6H2.500L1 7.500v15.070L2.500 24h12.070L16 22.570V18h4.700l1.300-1.430V4.500L17.500 0zm0 2.120l2.380 2.380H17.500V2.120zm-3 20.380h-12v-15H7v9.070L8.500 18h6v4.500zm6-6h-12v-15H16V6h4.500v10.500z"/></svg>
<svg style="left:2480px;top:260px;" width="48" height="48" viewBox="0 0 24 24"><path fill="#858585" d="M15.250 0a8.250 8.250 0 0 0-6.180 13.720L1 22.880l1.120 1 8.050-9.120A8.251 8.251 0 1 0 15.250.010V0zm0 15a6.750 6.750 0 1 1 0-13.500 6.750 6.750 0 0 1 0 13.500z"/></svg>
<svg style="left:2480px;top:364px;" width="48" height="48" viewBox="0 0 24 24"><path fill="#858585" d="M21.007 8.222A3.738 3.738 0 0 0 15.045 5.200a3.737 3.737 0 0 0 1.156 6.583 2.988 2.988 0 0 1-2.668 1.670h-2.990a4.456 4.456 0 0 0-2.989 1.165V7.400a3.737 3.737 0 1 0-1.494 0v9.117a3.776 3.776 0 1 0 1.816.099 2.990 2.990 0 0 1 2.668-1.667h2.990a4.484 4.484 0 0 0 4.223-3.039 3.736 3.736 0 0 0 3.250-3.687zM4.565 3.738a2.242 2.242 0 1 1 4.484 0 2.242 2.242 0 0 1-4.484 0zm4.484 16.441a2.242 2.242 0 1 1-4.484 0 2.242 2.242 0 0 1 4.484 0zm8.221-9.715a2.242 2.242 0 1 1 0-4.485 2.242 2.242 0 0 1 0 4.485z"/></svg>
<svg style="left:2480px;top:468px;" width="48" height="48" viewBox="0 0 24 24"><path fill="#ffffff" d="M10.940 13.500l-1.320 1.320a3.730 3.730 0 0 0-7.240 0L1.060 13.500 0 14.560l1.720 1.720-.220.220V18H0v1.500h1.500v.080c.077.489.214.966.410 1.420L0 22.940 1.060 24l1.650-1.650A4.308 4.308 0 0 0 6 24a4.310 4.310 0 0 0 3.290-1.650L10.940 24 12 22.940 10.090 21c.198-.464.336-.951.410-1.450v-.100H12V18h-1.500v-1.500l-.220-.220L12 14.560l-1.060-1.060zM6 13.500a2.250 2.250 0 0 1 2.250 2.250h-4.500A2.250 2.250 0 0 1 6 13.500zm3 6a3.330 3.330 0 0 1-3 3 3.330 3.330 0 0 1-3-3v-2.250h6v2.250zm14.760-9.900v1.260L13.500 17.370V15.600l8.500-5.370L9 2v9.460a5.070 5.070 0 0 0-1.500-.720V.630L8.640 0l15.120 9.600z"/></svg>
<div style="left:2548px;top:444px;width:4px;height:96px;background:#ffffff;"></div>
<div style="left:2504px;top:492px;width:32px;height:32px;background:#007acc;border-radius:50%;"></div>
<span style="left:2516.53px;top:495.15px;font-size:18px;line-height:27px;color:#ffffff;-webkit-text-stroke:0.9px;">1</span>
<svg style="left:2480px;top:572px;" width="48" height="48" viewBox="0 0 24 24"><g fill="none" stroke="#858585" stroke-width="1.500"><path d="M12.600 18H1.350V3.100h20.150v8.700" stroke-width="1.650"/><path d="M5.200 21.700h5.900"/><circle cx="17.800" cy="17.900" r="5.250"/><path d="M15.400 16.100l1.700 1.700-1.700 1.700M20.400 14.900l-1.700 1.700 1.700 1.700" stroke-width="1.200"/></g></svg>
<svg style="left:2480px;top:676px;" width="48" height="48" viewBox="0 0 24 24"><path fill="#858585" fill-rule="evenodd" d="M13.500 1.500L15 0h7.500L24 1.500V9l-1.500 1.500H15L13.500 9V1.500zm1.500 0V9h7.500V1.500H15zM0 15V6l1.500-1.500H9L10.500 6v7.500H18l1.500 1.500v7.500L18 24H1.500L0 22.500V15zm9-1.500V6H1.500v7.500H9zM9 15H1.500v7.500H9V15zm1.500 7.500H18V15h-7.500v7.500z"/></svg>
<svg style="left:2480px;top:780px;" width="48" height="48" viewBox="0 0 24 24"><g fill="none" stroke="#858585" stroke-width="1.500" stroke-linejoin="round"><path d="M7.500 2.200h9"/><path d="M9.750 2.200v7.300L3.700 20.600a.700.700 0 0 0 .600 1h15.400a.700.700 0 0 0 .600-1L14.250 9.500v-7.300"/><path d="M6.700 15.700h10.600"/></g></svg>
<svg style="left:2480px;top:884px;" width="48" height="48" viewBox="0 0 24 24"><circle cx="12" cy="12" r="11.250" fill="none" stroke="#858585" stroke-width="1.500"/><clipPath id="ghc"><circle cx="8" cy="8" r="7.900"/></clipPath><g transform="translate(1.760 2.160) scale(1.280)"><path clip-path="url(#ghc)" fill="#858585" fill-rule="evenodd" d="M8 0a8 8 0 1 0 0 16A8 8 0 0 0 8 0z M8 0C3.580 0 0 3.580 0 8c0 3.540 2.290 6.530 5.470 7.590.400.070.550-.170.550-.380 0-.190-.010-.820-.010-1.490-2.010.370-2.530-.490-2.690-.940-.090-.230-.480-.940-.820-1.130-.280-.150-.680-.520-.010-.530.630-.010 1.080.580 1.230.820.720 1.210 1.870.870 2.330.660.070-.520.280-.870.510-1.070-1.780-.200-3.640-.890-3.640-3.950 0-.870.310-1.590.820-2.150-.080-.200-.360-1.020.080-2.120 0 0 .670-.210 2.200.820.640-.180 1.320-.270 2-.270.680 0 1.360.090 2 .270 1.530-1.040 2.200-.820 2.200-.820.440 1.100.160 1.920.080 2.120.510.560.820 1.270.820 2.150 0 3.070-1.870 3.750-3.650 3.950.290.250.540.730.540 1.480 0 1.070-.010 1.930-.010 2.200 0 .210.150.460.550.380A8.013 8.013 0 0 0 16 8c0-4.420-3.580-8-8-8z"/></g></svg>
<svg style="left:2480px;top:1668px;" width="48" height="48" viewBox="0 0 24 24"><g fill="none" stroke="#858585" stroke-width="1.500"><circle cx="12" cy="12" r="11.250"/><circle cx="12" cy="9.300" r="4.700"/><path d="M4.800 20.200a7.400 7.400 0 0 1 14.400 0"/></g></svg>
<svg style="left:2479px;top:1771px;" width="50" height="50" viewBox="0 0 50 50"><path d="M19.24 9.86 L20.61 2.93 L29.39 2.93 L30.76 9.86 L31.64 10.22 L37.50 6.29 L43.71 12.50 L39.78 18.36 L40.14 19.24 L47.07 20.61 L47.07 29.39 L40.14 30.76 L39.78 31.64 L43.71 37.50 L37.50 43.71 L31.64 39.78 L30.76 40.14 L29.39 47.07 L20.61 47.07 L19.24 40.14 L18.36 39.78 L12.50 43.71 L6.29 37.50 L10.22 31.64 L9.86 30.76 L2.93 29.39 L2.93 20.61 L9.86 19.24 L10.22 18.36 L6.29 12.50 L12.50 6.29 L18.36 10.22 Z" fill="none" stroke="#858585" stroke-width="3.2" stroke-linejoin="round"/><circle cx="25" cy="25" r="5.2" fill="none" stroke="#858585" stroke-width="3.2"/></svg>
<div style="left:2504px;top:1796px;width:32px;height:32px;background:#007acc;border-radius:50%;"></div>
<span style="left:2516.53px;top:1799.15px;font-size:18px;line-height:27px;color:#ffffff;-webkit-text-stroke:0.9px;">1</span>
<svg style="left:1529px;top:539px;" width="28" height="28" viewBox="0 0 28 28"><rect x="1.500" y="1.500" width="25" height="25" rx="2.500" fill="none" stroke="#c8c8c8" stroke-width="2"/><path d="M1.500 14h25" stroke="#c8c8c8" stroke-width="2"/></svg>
<svg style="left:1576px;top:546px;" width="32" height="16" viewBox="0 0 32 16"><circle cx="6" cy="8" r="2.100" fill="#c8c8c8"/><circle cx="16" cy="8" r="2.100" fill="#c8c8c8"/><circle cx="26" cy="8" r="2.100" fill="#c8c8c8"/></svg>
<svg style="left:1629px;top:539px;" width="24" height="27.7" viewBox="0 0 26 30"><g fill="none" stroke="#c8c8c8" stroke-width="2"><path d="M1 6h24"/><path d="M8.500 6V3.500a1.500 1.500 0 0 1 1.500-1.500h6a1.500 1.500 0 0 1 1.500 1.500V6"/><path d="M4 6v20a2 2 0 0 0 2 2h14a2 2 0 0 0 2-2V6"/><path d="M9 10.500v13 M13 10.500v13 M17 10.500v13"/></g></svg>
<svg style="left:2424px;top:1854px;" width="104" height="40" viewBox="2424 1854 104 40"><ellipse cx="2447.100" cy="1878" rx="15.200" ry="8.200" fill="#ffffff"/><path d="M2438.100 1881.600V1873L2447.300 1870.500L2455.500 1873V1881.600z" fill="#cc6633"/><g fill="#ffffff"><circle cx="2441.500" cy="1866.900" r="6.400"/><circle cx="2452.500" cy="1866.500" r="6.600"/></g><circle cx="2441.300" cy="1866.700" r="3.300" fill="#cc6633"/><rect x="2442.700" y="1874.800" width="2.900" height="5.600" rx="1.400" fill="#ffffff"/><rect x="2449.100" y="1874.800" width="2.900" height="5.600" rx="1.400" fill="#ffffff"/><g fill="none" stroke="#ffffff" stroke-width="1.900"><path d="M2507.600 1862.800c-5 .8-7.200 5-7.200 9.200v5.500l-1.800 4.800h19.600l-1.700-4.800v-2.300"/><path d="M2505 1882.800a3.300 3.300 0 0 0 6.600 0"/></g><circle cx="2515.100" cy="1866.900" r="5.100" fill="#ffffff"/></svg>
<div style="left:1472px;top:132px;width:358px;height:64px;background:#333333;box-shadow:0 2px 9px 1px rgba(0,0,0,.6);"></div>
<svg style="left:1496px;top:152px;" width="16" height="26" viewBox="0 0 16 26"><rect x="1.5" y="1.2" width="3.600" height="3.600" fill="#7f7f7f"/><rect x="1.5" y="9.2" width="3.600" height="3.600" fill="#7f7f7f"/><rect x="1.5" y="17.2" width="3.600" height="3.600" fill="#7f7f7f"/><rect x="9.5" y="1.2" width="3.600" height="3.600" fill="#7f7f7f"/><rect x="9.5" y="9.2" width="3.600" height="3.600" fill="#7f7f7f"/><rect x="9.5" y="17.2" width="3.600" height="3.600" fill="#7f7f7f"/></svg>
<svg style="left:1528px;top:150px;" width="28" height="28" viewBox="0 0 28 28"><path d="M3.200 1.500v25" stroke="#75beff" stroke-width="2.800"/><path d="M10.500 3.500 L24.500 14 L10.500 24.500 Z" fill="none" stroke="#75beff" stroke-width="2.600" stroke-linejoin="miter"/></svg>
<svg style="left:1578px;top:149px;" width="30" height="30" viewBox="0 0 30 30"><path d="M3 15.500 A11.500 11.500 0 0 1 25 11" fill="none" stroke="#75beff" stroke-width="2.800"/><path d="M26 2v10h-10" fill="none" stroke="#75beff" stroke-width="2.800"/><circle cx="14.500" cy="24" r="4.200" fill="#75beff"/></svg>
<svg style="left:1632px;top:148px;" width="26" height="32" viewBox="0 0 26 32"><path d="M13 1v16 M4.500 10 L13 18.500 L21.500 10" fill="none" stroke="#75beff" stroke-width="2.800"/><circle cx="13" cy="26.500" r="4.200" fill="#75beff"/></svg>
<svg style="left:1684px;top:148px;" width="26" height="32" viewBox="0 0 26 32"><path d="M13 19V3 M4.500 10.500 L13 2 L21.500 10.500" fill="none" stroke="#75beff" stroke-width="2.800"/><circle cx="13" cy="26.500" r="4.200" fill="#75beff"/></svg>
<svg style="left:1735px;top:150px;" width="28" height="28" viewBox="0 0 28 28"><path d="M5.500 7.500 A11 11 0 1 1 3 15" fill="none" stroke="#89d185" stroke-width="2.800"/><path d="M4 1.500v7.500h7.500" fill="none" stroke="#89d185" stroke-width="2.800"/></svg>
<svg style="left:1785.4px;top:148.6px;" width="30" height="30" viewBox="0 0 30 30"><g fill="none" stroke="#ee9268" stroke-width="2" stroke-linecap="butt"><path d="M27.500 2.500 L23.500 6.500"/><path d="M14 7 L23 16 l2.200-2.200 a6.300 6.300 0 0 0 -9 -9 z" stroke-linejoin="round"/><path d="M2.500 27.500 L6.500 23.500"/><path d="M7 14 L16 23 l-2.200 2.200 a6.300 6.300 0 0 1 -9 -9 z" stroke-linejoin="round"/><path d="M9.500 16.500 l3.500 -3.500 M13.500 20.500 l3.500 -3.500"/></g></svg>
</div></div>
<div id="edge"></div>
</body></html>
